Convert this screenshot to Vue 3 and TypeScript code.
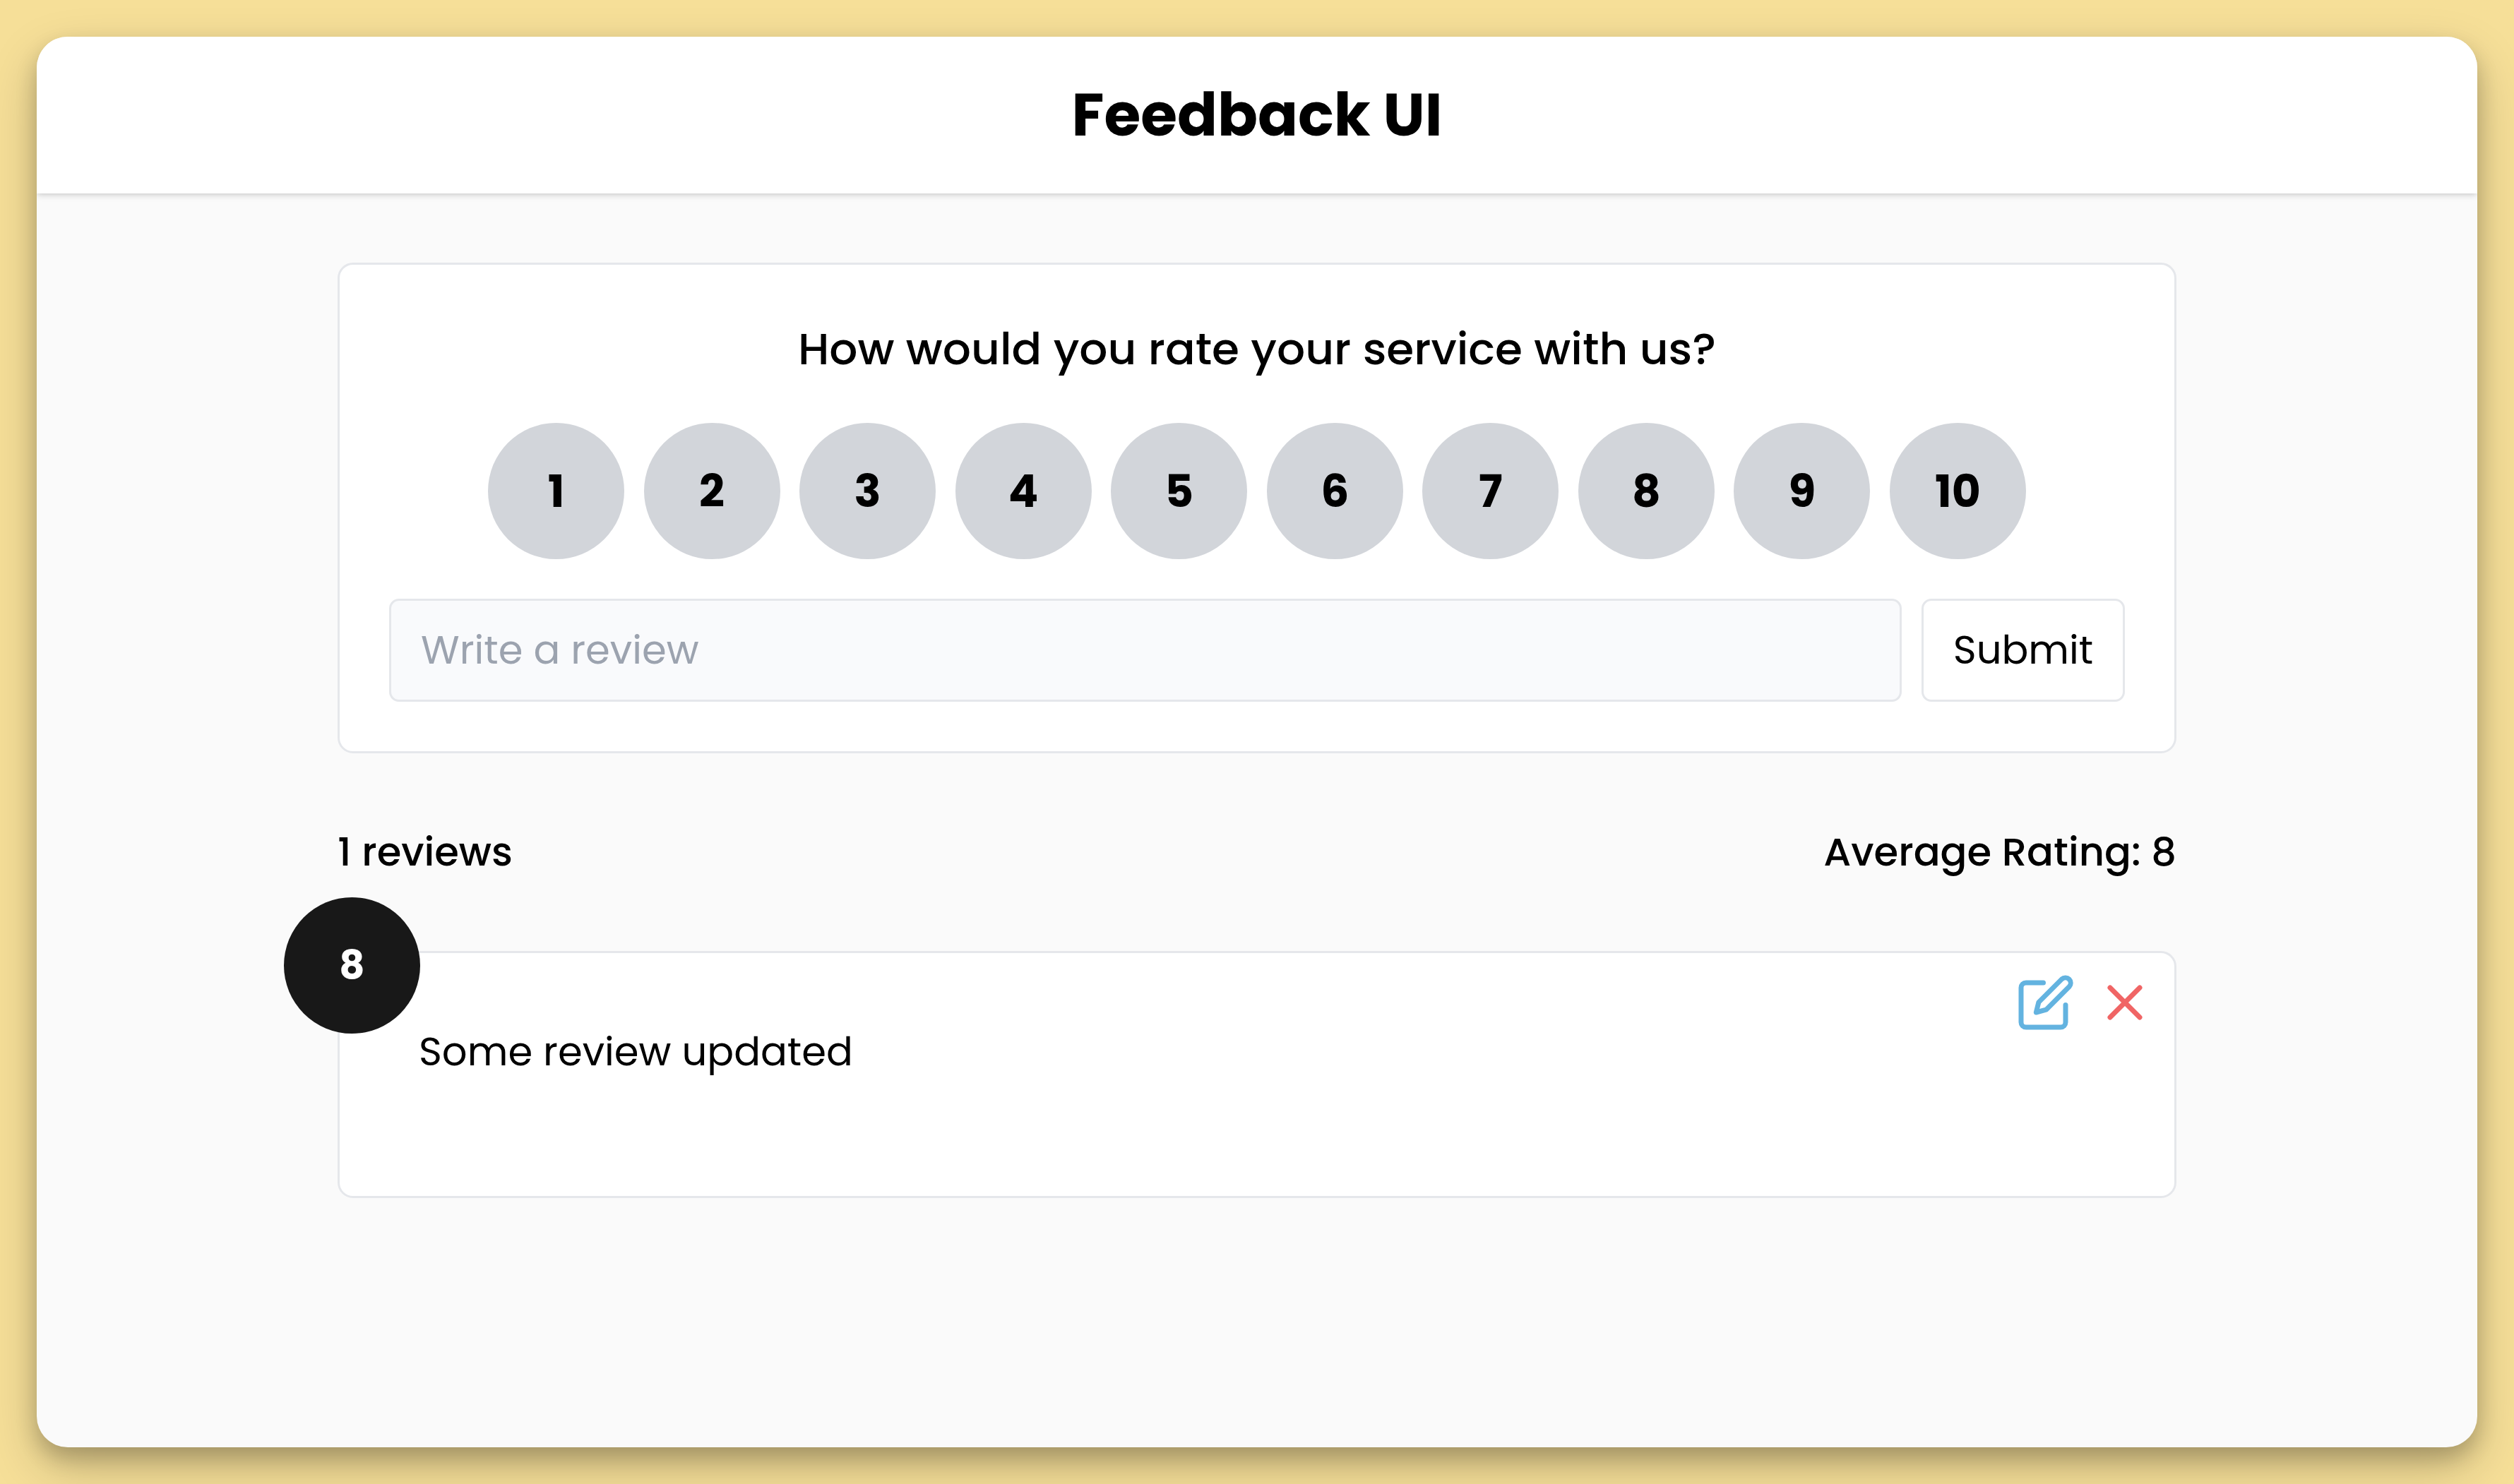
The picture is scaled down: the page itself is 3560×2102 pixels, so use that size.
<script setup lang="ts">
import { computed, ref } from 'vue'

interface Review {
  id: number
  rating: number
  text: string
}

const scores: number[] = Array.from({ length: 10 }, (_, i) => i + 1)
const selected = ref<number | null>(null)
const draft = ref('')
const editing = ref<number | null>(null)
const reviews = ref<Review[]>([{ id: 1, rating: 8, text: 'Some review updated' }])

const average = computed(() => {
  if (!reviews.value.length) return 0
  const total = reviews.value.reduce((sum, r) => sum + r.rating, 0)
  return Math.round((total / reviews.value.length) * 10) / 10
})

function submit(): void {
  const text = draft.value.trim()
  if (!text || selected.value === null) return
  const current = reviews.value.find((r) => r.id === editing.value)
  if (current) {
    current.text = text
    current.rating = selected.value
  } else {
    reviews.value.unshift({ id: Date.now(), rating: selected.value, text })
  }
  draft.value = ''
  selected.value = null
  editing.value = null
}

function edit(review: Review): void {
  editing.value = review.id
  draft.value = review.text
  selected.value = review.rating
}

function remove(id: number): void {
  reviews.value = reviews.value.filter((r) => r.id !== id)
}
</script>

<template>
  <div class="page">
    <div class="window">
      <header class="header">
        <h1 class="title">Feedback UI</h1>
      </header>
      <main class="content">
        <form class="panel" @submit.prevent="submit">
          <h2 class="question">How would you rate your service with us?</h2>
          <div class="scores" role="radiogroup" aria-label="Rating">
            <label v-for="n in scores" :key="n" class="score" :class="{ active: selected === n }">
              <input v-model="selected" class="score-input" type="radio" name="rating" :value="n" />
              <span>{{ n }}</span>
            </label>
          </div>
          <div class="entry">
            <input v-model="draft" class="field" type="text" placeholder="Write a review" aria-label="Write a review" />
            <button class="submit" type="submit">Submit</button>
          </div>
        </form>

        <div class="stats">
          <p>{{ reviews.length }} reviews</p>
          <p>Average Rating: {{ average }}</p>
        </div>

        <article v-for="review in reviews" :key="review.id" class="review">
          <div class="badge">{{ review.rating }}</div>
          <p class="review-text">{{ review.text }}</p>
          <div class="actions">
            <button class="action edit" type="button" aria-label="Edit review" @click="edit(review)">
              <svg viewBox="34 28 84 84" aria-hidden="true">
                <path d="M73.5 42H49a7 7 0 0 0-7 7v49a7 7 0 0 0 7 7h49a7 7 0 0 0 7-7V73.5" />
                <path d="M66.9 69.6L99.6 36.9a7.5 7.5 0 0 1 10.6 10.6L77.5 80.2L63.3 84Z" />
              </svg>
            </button>
            <button class="action remove" type="button" aria-label="Delete review" @click="remove(review.id)">
              <svg viewBox="0 0 84 84" aria-hidden="true">
                <path d="M21 21L63 63M63 21L21 63" />
              </svg>
            </button>
          </div>
        </article>
      </main>
    </div>
  </div>
</template>

<style>
body {
  background: #f6df98;
}
</style>

<style scoped>
.page,
.page * {
  box-sizing: border-box;
}

.page {
  display: flex;
  min-height: 100vh;
  padding: 52px;
  background: #f6df98;
  color: #000;
  font-family: Poppins, Inter, 'Open Sans', sans-serif;
  font-size: 56px;
  line-height: 88px;
}

.page h1,
.page h2,
.page p {
  margin: 0;
}

.page input,
.page button {
  font: inherit;
  color: inherit;
}

.window {
  flex: 1;
  min-width: 0;
  overflow: hidden;
  border-radius: 44px;
  background: #fafafa;
  box-shadow:
    0 29px 72px rgba(0, 0, 0, 0.2),
    0 15px 30px rgba(0, 0, 0, 0.2);
}

.header {
  padding: 48px;
  background: #fff;
  box-shadow:
    0 3px 9px rgba(0, 0, 0, 0.12),
    0 3px 6px -3px rgba(0, 0, 0, 0.12);
}

.title {
  font-size: 84px;
  font-weight: 700;
  line-height: 126px;
  text-align: center;
}

.content {
  width: 100%;
  max-width: 2604px;
  margin: 98px auto;
}

.panel {
  display: flex;
  flex-direction: column;
  gap: 56px;
  padding: 70px;
  border: 3px solid #e5e7eb;
  border-radius: 22px;
  background: #fff;
}

.question {
  font-size: 63px;
  font-weight: 500;
  line-height: 98px;
  text-align: center;
}

.scores {
  display: flex;
  justify-content: space-between;
  width: 100%;
  max-width: 2178px;
  margin: 0 auto;
}

.score {
  position: relative;
  display: flex;
  align-items: center;
  justify-content: center;
  width: 193px;
  height: 193px;
  border-radius: 50%;
  background: #d2d5da;
  font-size: 63px;
  font-weight: 700;
  cursor: pointer;
}

.score.active {
  background: #181818;
  color: #fff;
}

.score-input {
  position: absolute;
  inset: 0;
  margin: 0;
  opacity: 0;
  cursor: pointer;
}

.entry {
  display: flex;
  gap: 28px;
  height: 146px;
}

.field,
.submit {
  border: 3px solid #e5e7eb;
  border-radius: 14px;
}

.field {
  flex: 1;
  min-width: 0;
  padding: 0 42px;
  background: #f9fafc;
  outline: none;
}

.field::placeholder {
  color: #9ca3af;
  opacity: 1;
}

.submit {
  width: 288px;
  padding: 0;
  background: #fff;
  cursor: pointer;
}

.stats {
  display: flex;
  justify-content: space-between;
  margin: 96px 0;
  font-weight: 500;
}

.review {
  position: relative;
  margin-bottom: 96px;
  padding: 96px 112px 160px;
  border: 3px solid #e5e7eb;
  border-radius: 22px;
  background: #fff;
}

.badge {
  position: absolute;
  top: -79px;
  left: -79px;
  display: flex;
  align-items: center;
  justify-content: center;
  width: 193px;
  height: 193px;
  border-radius: 50%;
  background: #181818;
  color: #fff;
  font-weight: 700;
}

.actions {
  position: absolute;
  top: 28px;
  right: 28px;
  display: flex;
  gap: 29px;
}

.action {
  width: 84px;
  height: 84px;
  padding: 0;
  border: 0;
  background: none;
  cursor: pointer;
}

.action svg {
  display: block;
  width: 84px;
  height: 84px;
  fill: none;
  stroke: currentColor;
  stroke-width: 7;
  stroke-linecap: round;
  stroke-linejoin: round;
}

.page .edit {
  color: #63b3e0;
}

.page .remove {
  color: #f06565;
}
</style>
